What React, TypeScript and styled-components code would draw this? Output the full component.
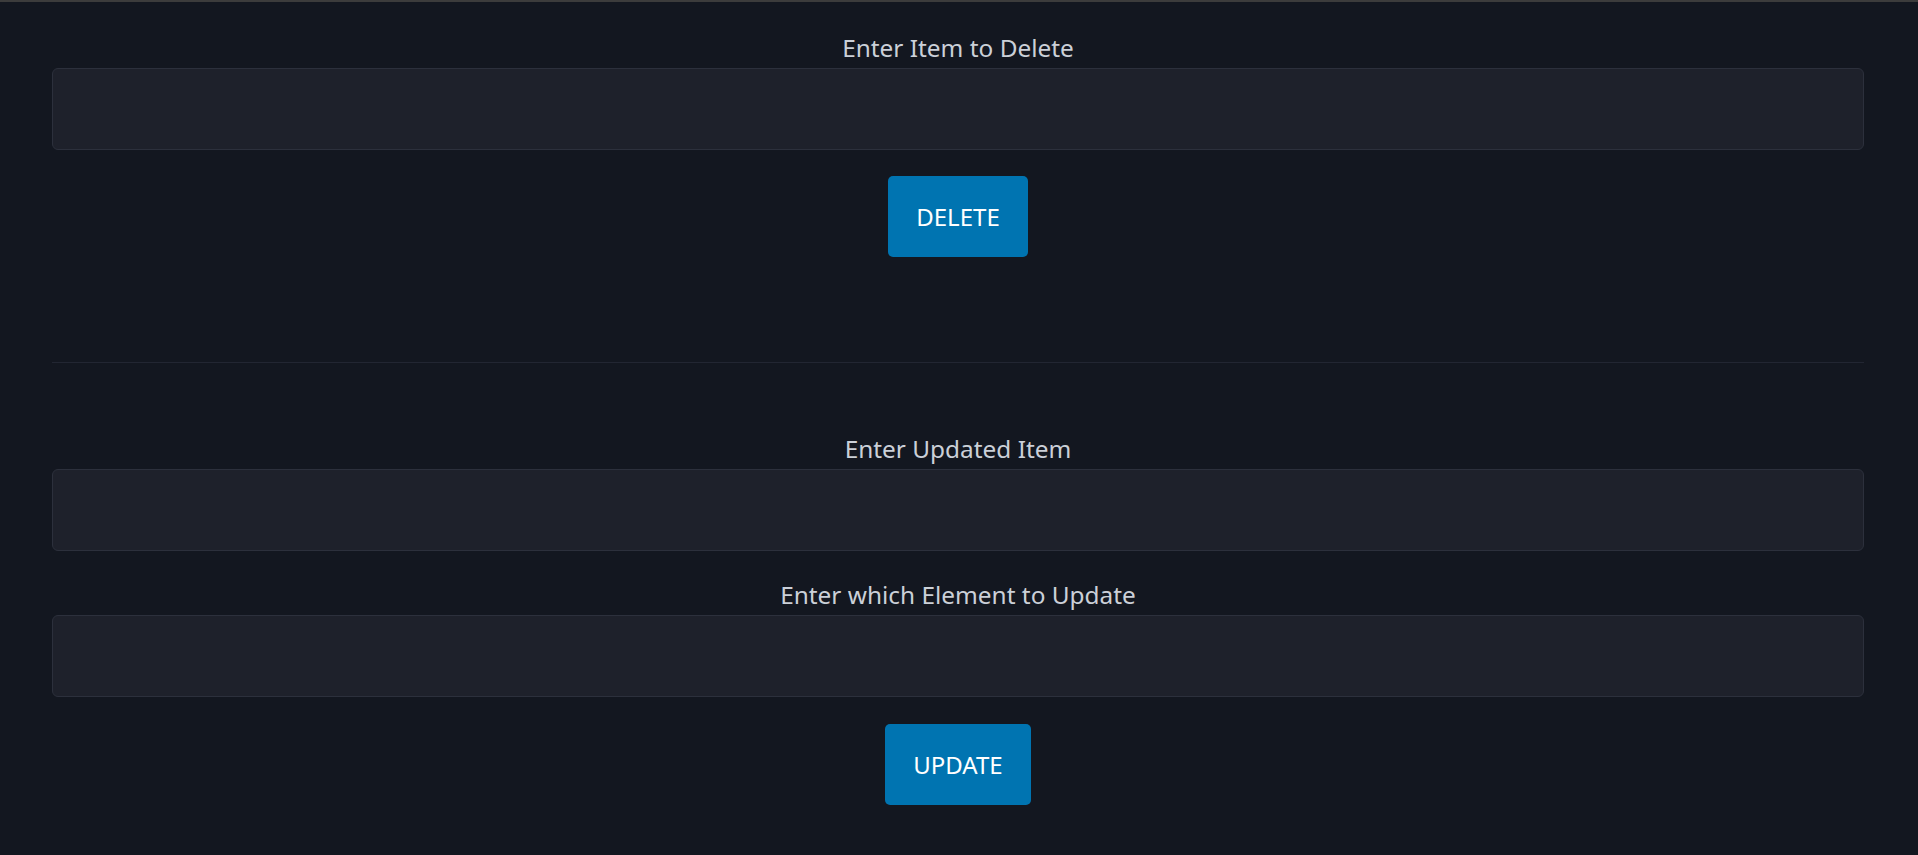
import React from "react";
import styled, { createGlobalStyle } from "styled-components";

const Global = createGlobalStyle`
  html, body {
    margin: 0;
    padding: 0;
    background: #131720;
  }
  body {
    font-family: "Noto Sans", "Open Sans", Arial, sans-serif;
  }
`;

const Page = styled.div`
  min-height: 855px;
  box-sizing: border-box;
  border-top: 2px solid #3c3c3c;
  background: #131720;
  padding: 34px 54px 40px 52px;
  display: flex;
  flex-direction: column;
`;

const Section = styled.section`
  display: flex;
  flex-direction: column;
  align-items: center;
`;

const Field = styled.div<{ $top?: number }>`
  width: 100%;
  display: flex;
  flex-direction: column;
  align-items: center;
  margin-top: ${(p) => p.$top ?? 0}px;
`;

const Label = styled.label`
  font-size: 24.4px;
  line-height: 24px;
  height: 24px;
  color: #cbd0d8;
  margin-bottom: 8px;
`;

const Input = styled.input`
  width: 100%;
  height: 82px;
  box-sizing: border-box;
  background: #1e212b;
  border: 1px solid #2c303c;
  border-radius: 6px;
  color: #e5e7eb;
  font-size: 22px;
  padding: 0 16px;
  outline: none;
`;

const Button = styled.button<{ $top: number }>`
  margin-top: ${(p) => p.$top}px;
  height: 81px;
  padding: 0 28px;
  background: #0074b1;
  color: #ffffff;
  border: none;
  border-radius: 5px;
  font-family: "Noto Sans", "Open Sans", Arial, sans-serif;
  font-size: 24px;
  cursor: pointer;
`;

const Divider = styled.hr`
  width: 100%;
  border: none;
  border-top: 1px solid #222632;
  margin: 105px 0 74px;
`;

export default function App() {
  return (
    <>
      <Global />
      <Page>
        <Section>
          <Field>
            <Label>Enter Item to Delete</Label>
            <Input type="text" />
          </Field>
          <Button $top={26}>DELETE</Button>
        </Section>
        <Divider />
        <Section>
          <Field>
            <Label>Enter Updated Item</Label>
            <Input type="text" />
          </Field>
          <Field $top={32}>
            <Label>Enter which Element to Update</Label>
            <Input type="text" />
          </Field>
          <Button $top={27}>UPDATE</Button>
        </Section>
      </Page>
    </>
  );
}
